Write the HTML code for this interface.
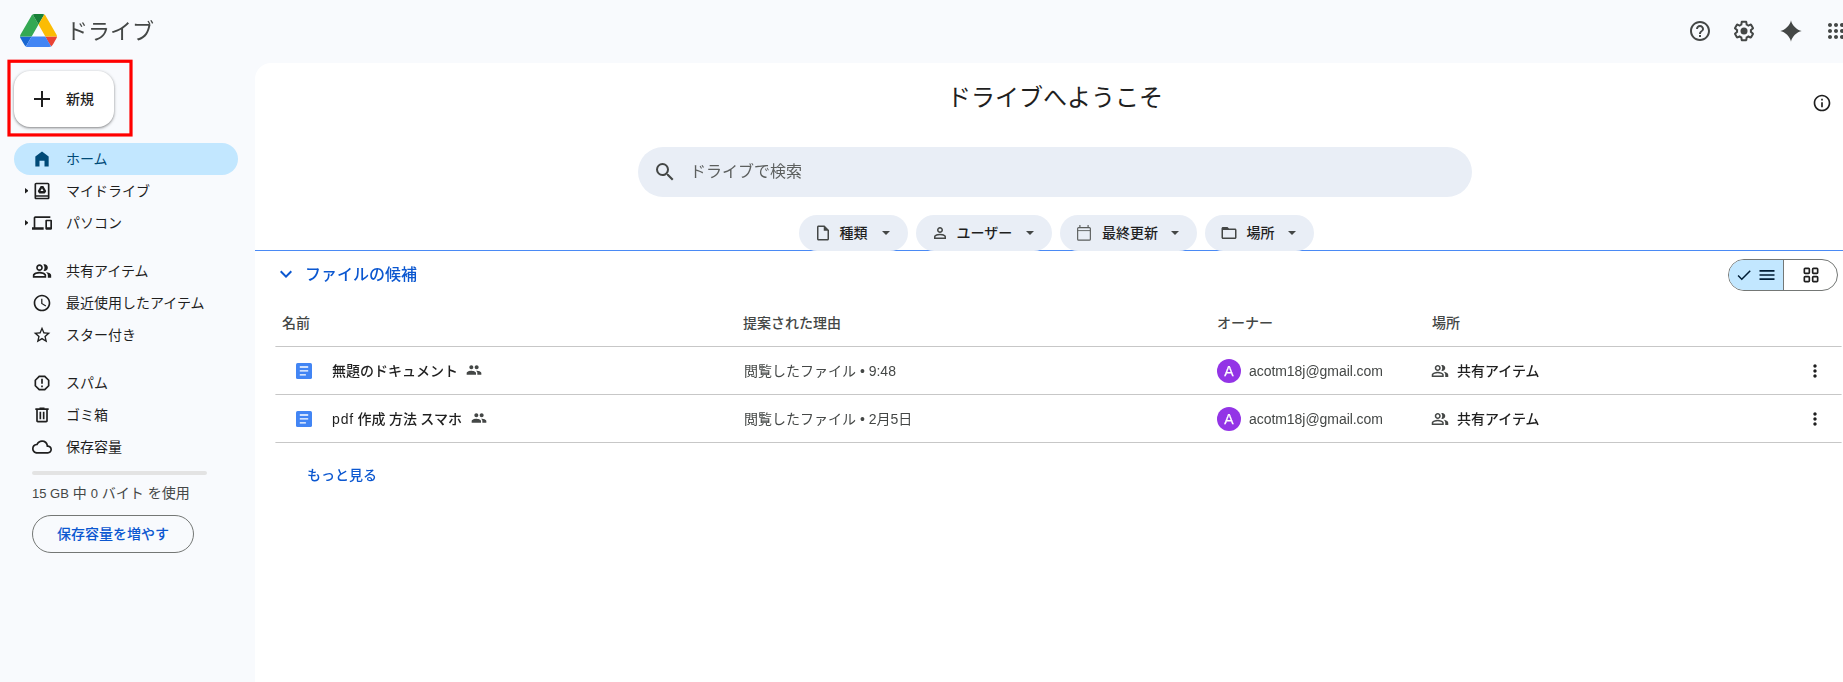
<!DOCTYPE html>
<html lang="ja">
<head>
<meta charset="utf-8">
<title>ホーム - Google ドライブ</title>
<style>
*{box-sizing:border-box;margin:0;padding:0}
html,body{width:1843px;height:682px;overflow:hidden;background:#f8fafd;}
body{font-family:"Liberation Sans","Noto Sans CJK JP",sans-serif;color:#1f1f1f;position:relative;font-size:14px;}
.abs{position:absolute}
svg{display:block}
/* header */
#logo{left:19.500px;top:14px;width:37px;height:33px}
#brand{left:66px;top:15px;font-size:22px;line-height:34px;color:#444746;white-space:nowrap;letter-spacing:0}
.hicon{top:19px;width:24px;height:24px}
/* new button */
#redbox{left:0;top:50px;width:150px;height:100px}
#newbtn{left:14px;top:71px;width:100px;height:56px;border-radius:16px;background:#fff;box-shadow:0 1px 2px rgba(0,0,0,.3),0 1px 3px 1px rgba(0,0,0,.15)}
#newbtn .plus{left:16px;top:16px;width:24px;height:24px}
#newbtn .lbl{left:52px;top:0;line-height:56px;font-size:14px;font-weight:500;color:#1f1f1f}
/* nav */
.nav{left:14px;width:224px;height:32px;border-radius:16px}
.nav.sel{background:#c2e7ff}
.nav .ic{position:absolute;left:18px;top:6px;width:20px;height:20px}
.nav .tx{position:absolute;left:52px;top:0;line-height:32px;font-size:14px;color:#1f1f1f;white-space:nowrap}
.nav.sel .tx{color:#004a77;font-weight:400}
.nav .car{position:absolute;left:10.500px;top:13.300px;width:3.600px;height:5.400px}
#bar{left:32px;top:471px;width:175px;height:4px;border-radius:2px;background:#e3e3e3}
#quota{left:32px;top:483px;font-size:14px;line-height:20px;color:#444746;white-space:nowrap}
#quota .l{font-size:13px}
#more{left:32px;top:515px;width:162px;height:38px;border:1px solid #747775;border-radius:20px;text-align:center;line-height:36px;font-size:14px;font-weight:500;color:#0b57d0}
/* main */
#main{left:255px;top:63px;width:1600px;height:640px;background:#fff;border-radius:16px 0 0 0}
#title{left:255px;top:80px;width:1600px;text-align:center;font-size:24px;line-height:36px;color:#1f1f1f}
#search{left:638px;top:147px;width:834px;height:50px;border-radius:25px;background:#e9eef6}
#search .ph{position:absolute;left:52px;top:1px;line-height:48px;font-size:16px;color:#5c5f5e}
#search svg{position:absolute;left:15px;top:13px;width:24px;height:24px}
.chip{top:215px;height:36px;border-radius:18px;background:#e9eef6;font-size:14px;font-weight:500;color:#1f1f1f}
.chip .ci{position:absolute;left:15px;top:9px;width:18px;height:18px}
.chip .ct{position:absolute;left:40.500px;top:0;line-height:36px;white-space:nowrap}
.chip .cd{position:absolute;right:18px;top:16px;width:0;height:0;border-top:4px solid #444746;border-left:4px solid transparent;border-right:4px solid transparent}
#lower{left:255px;top:250px;width:1600px;height:440px;background:#fff;border-top:1px solid #4a8af5}
#sect{left:305px;top:262px;font-size:16px;line-height:26px;font-weight:500;color:#0b57d0;white-space:nowrap}
.th{top:312px;font-size:14px;line-height:22px;font-weight:500;color:#444746;white-space:nowrap}
#brand,#search .ph,#sect,#seemore{will-change:transform}
.hr{left:276px;width:1565px;height:1px;background:#c7c7c7}
.td{font-size:14px;line-height:22px;white-space:nowrap;will-change:transform}
.name{color:#1f1f1f;font-weight:500;word-spacing:-.5px}
.why{color:#444746}
.own{color:#444746;letter-spacing:-.05px}
.loc{color:#1f1f1f;font-weight:500}
.av{width:24px;height:24px;border-radius:12px;background:#9334e6;color:#fff;font-size:14px;font-weight:400;text-align:center;line-height:25px;will-change:transform;-webkit-text-stroke:.25px #fff}
#seemore{left:307px;top:464px;font-size:14px;line-height:22px;font-weight:500;color:#0b57d0}
</style>
</head>
<body>
<!-- header -->
<svg id="logo" class="abs" viewBox="0 0 87.3 78"><path d="m6.6 66.85 3.85 6.65c.8 1.4 1.95 2.5 3.3 3.3l13.75-23.8h-27.5c0 1.55.4 3.1 1.200 4.500z" fill="#1967d2"/><path d="m43.650 25-13.750-23.800c-1.350.8-2.500 1.900-3.300 3.300l-25.400 44a9.060 9.060 0 0 0 -1.200 4.500h27.500z" fill="#34a853"/><path d="m73.550 76.800c1.350-.8 2.500-1.900 3.300-3.300l1.600-2.750 7.650-13.250c.8-1.400 1.200-2.950 1.200-4.500h-27.502l5.852 11.500z" fill="#ea4335"/><path d="m43.650 25 13.750-23.800c-1.350-.8-2.900-1.200-4.500-1.200h-18.500c-1.600 0-3.150.45-4.500 1.200z" fill="#188038"/><path d="m59.800 53h-32.300l-13.750 23.800c1.350.8 2.900 1.200 4.500 1.200h50.800c1.600 0 3.150-.45 4.500-1.200z" fill="#4285f4"/><path d="m73.400 26.500-12.700-22c-.8-1.400-1.950-2.500-3.300-3.300l-13.750 23.800 16.150 28h27.450c0-1.550-.4-3.100-1.200-4.500z" fill="#fbbc04"/></svg>
<div id="brand" class="abs">ドライブ</div>

<svg class="abs hicon" style="left:1688px" viewBox="0 0 24 24" fill="#444746"><path d="M11 18h2v-2h-2v2zm1-16C6.480 2 2 6.480 2 12s4.480 10 10 10 10-4.480 10-10S17.520 2 12 2zm0 18c-4.410 0-8-3.590-8-8s3.590-8 8-8 8 3.590 8 8-3.590 8-8 8zm0-14c-2.210 0-4 1.790-4 4h2c0-1.100.9-2 2-2s2 .9 2 2c0 2-3 1.750-3 5h2c0-2.250 3-2.500 3-5 0-2.210-1.790-4-4-4z"/></svg>
<svg class="abs hicon" style="left:1732px" viewBox="0 0 24 24" fill="#444746"><path d="M13.850 22.250h-3.700c-.74 0-1.360-.54-1.450-1.270l-.27-1.890c-.27-.14-.53-.29-.79-.46l-1.800.72c-.7.260-1.470-.03-1.810-.65L2.200 15.530c-.35-.66-.2-1.440.36-1.880l1.530-1.190c-.01-.15-.02-.3-.02-.46 0-.15.010-.31.020-.46l-1.520-1.190c-.59-.45-.74-1.260-.37-1.880l1.850-3.190c.34-.62 1.110-.9 1.790-.63l1.810.73c.26-.17.520-.32.780-.46l.27-1.910c.09-.7.710-1.250 1.440-1.250h3.700c.74 0 1.360.54 1.450 1.270l.27 1.890c.27.140.53.290.79.460l1.800-.72c.71-.26 1.480.03 1.820.65l1.840 3.180c.36.660.2 1.440-.36 1.880l-1.520 1.190c.01.15.02.3.02.46s-.01.310-.02.460l1.520 1.190c.56.450.720 1.230.37 1.860l-1.860 3.220c-.34.620-1.110.9-1.800.63l-1.800-.72c-.26.170-.52.320-.78.460l-.27 1.910c-.1.680-.72 1.220-1.460 1.220zm-3.230-2h2.760l.37-2.550.53-.22c.44-.18.880-.44 1.340-.78l.45-.34 2.380.96 1.380-2.400-2.030-1.580.07-.56c.03-.26.060-.51.060-.78s-.03-.53-.06-.78l-.07-.56 2.030-1.580-1.390-2.400-2.390.96-.45-.35c-.42-.32-.87-.58-1.330-.77l-.52-.22-.37-2.550h-2.760l-.37 2.550-.53.21c-.44.190-.88.440-1.340.79l-.45.33-2.380-.95-1.390 2.390 2.030 1.580-.07.560a7 7 0 0 0-.06.790c0 .26.020.53.060.78l.07.560-2.030 1.580 1.380 2.400 2.390-.96.450.35c.43.330.86.580 1.330.77l.53.22.38 2.550z"/><circle cx="12" cy="12" r="3.500"/></svg>
<svg class="abs hicon" style="left:1779px" viewBox="0 0 24 24" fill="#444746"><path d="M12 1.300C12.500 5.800 18.200 11.500 22.700 12C18.200 12.500 12.500 18.200 12 22.700C11.500 18.200 5.800 12.500 1.300 12C5.800 11.500 11.500 5.800 12 1.300z"/></svg>
<svg class="abs hicon" style="left:1824px" viewBox="0 0 24 24" fill="#444746"><path d="M6 8c1.100 0 2-.9 2-2s-.9-2-2-2-2 .9-2 2 .9 2 2 2zm6 12c1.100 0 2-.9 2-2s-.9-2-2-2-2 .9-2 2 .9 2 2 2zm-6 0c1.100 0 2-.9 2-2s-.9-2-2-2-2 .9-2 2 .9 2 2 2zm0-6c1.100 0 2-.9 2-2s-.9-2-2-2-2 .9-2 2 .9 2 2 2zm6 0c1.100 0 2-.9 2-2s-.9-2-2-2-2 .9-2 2 .9 2 2 2zm4-8c0 1.100.9 2 2 2s2-.9 2-2-.9-2-2-2-2 .9-2 2zm-4 2c1.100 0 2-.9 2-2s-.9-2-2-2-2 .9-2 2 .9 2 2 2zm6 6c1.100 0 2-.9 2-2s-.9-2-2-2-2 .9-2 2 .9 2 2 2zm0 6c1.100 0 2-.9 2-2s-.9-2-2-2-2 .9-2 2 .9 2 2 2z"/></svg>

<!-- new button -->
<svg id="redbox" class="abs" viewBox="0 50 150 100"><rect x="9" y="61.250" width="122" height="73.700" fill="none" stroke="#ff0000" stroke-width="3.200"/></svg>
<div id="newbtn" class="abs">
  <svg class="abs plus" viewBox="0 0 24 24" fill="#1f1f1f"><path d="M20 13h-7v7h-2v-7H4v-2h7V4h2v7h7v2z"/></svg>
  <div class="abs lbl">新規</div>
</div>

<!-- nav -->
<div class="abs nav sel" style="top:143px"><svg class="ic" viewBox="0 0 24 24" fill="#004a77"><path d="M12 3 4 9v12h5v-7h6v7h5V9z"/></svg><div class="tx">ホーム</div></div>
<div class="abs nav" style="top:175px"><svg class="car" viewBox="0 0 4 6" fill="#1f1f1f"><path d="M0 0 4 3 0 6z"/></svg><svg class="ic" viewBox="0 0 24 24" fill="#1f1f1f"><path d="M19 2H5C3.900 2 3 2.900 3 4V20C3 21.100 3.900 22 5 22H19C20.100 22 21 21.100 21 20V4C21 2.900 20.100 2 19 2ZM19 20H5V19H19V20ZM19 17H5V4H19V17Z"/><path d="M13.120 6H10.880C10.550 6 10.270 6.190 10.080 6.470L7.140 11.610C7 11.890 7 12.220 7.140 12.500L8.260 14.460C8.400 14.740 8.730 14.930 9.060 14.930H14.940C15.270 14.930 15.600 14.740 15.740 14.460L16.860 12.500C17 12.220 17 11.890 16.860 11.610L13.920 6.470C13.780 6.190 13.450 6 13.120 6ZM10.130 12.070L12 8.800L13.870 12.070H10.130Z"/></svg><div class="tx">マイドライブ</div></div>
<div class="abs nav" style="top:207px"><svg class="car" viewBox="0 0 4 6" fill="#1f1f1f"><path d="M0 0 4 3 0 6z"/></svg><svg class="ic" viewBox="0 0 24 24" fill="#1f1f1f"><path d="M4 6h18V4H4c-1.100 0-2 .9-2 2v11H0v3h14v-3H4V6zm19 2h-6c-.55 0-1 .45-1 1v10c0 .55.45 1 1 1h6c.55 0 1-.45 1-1V9c0-.55-.45-1-1-1zm-1 9h-4v-7h4v7z"/></svg><div class="tx">パソコン</div></div>
<div class="abs nav" style="top:255px"><svg class="ic" viewBox="0 0 24 24" fill="#1f1f1f"><path d="M15 8c0-1.420-.5-2.730-1.330-3.760.42-.14.860-.24 1.330-.24 2.210 0 4 1.790 4 4s-1.790 4-4 4c-.43 0-.84-.09-1.230-.21-.03-.01-.06-.02-.1-.03A5.980 5.980 0 0 0 15 8zm1.660 5.130C18.030 14.060 19 15.320 19 17v3h4v-3c0-2.180-3.580-3.470-6.340-3.870zM9 6c-1.100 0-2 .9-2 2s.9 2 2 2 2-.9 2-2-.9-2-2-2zm0 9c-2.700 0-5.800 1.290-6 2.010V18h12v-1c-.2-.71-3.300-2-6-2M9 4c2.210 0 4 1.790 4 4s-1.790 4-4 4-4-1.790-4-4 1.790-4 4-4zm0 9c2.670 0 8 1.340 8 4v3H1v-3c0-2.660 5.330-4 8-4z"/></svg><div class="tx">共有アイテム</div></div>
<div class="abs nav" style="top:287px"><svg class="ic" viewBox="0 0 24 24" fill="#1f1f1f"><path d="M11.990 2C6.470 2 2 6.480 2 12s4.470 10 9.990 10C17.520 22 22 17.520 22 12S17.520 2 11.990 2zM12 20c-4.420 0-8-3.580-8-8s3.580-8 8-8 8 3.580 8 8-3.580 8-8 8zm.5-13H11v6l5.250 3.150.75-1.230-4.500-2.670z"/></svg><div class="tx">最近使用したアイテム</div></div>
<div class="abs nav" style="top:319px"><svg class="ic" viewBox="0 0 24 24" fill="#1f1f1f"><path d="m22 9.240-7.190-.62L12 2 9.190 8.630 2 9.240l5.460 4.730L5.820 21 12 17.270 18.180 21l-1.630-7.030L22 9.240zM12 15.400l-3.760 2.270 1-4.280-3.320-2.880 4.380-.38L12 6.100l1.710 4.040 4.380.38-3.320 2.880 1 4.280L12 15.400z"/></svg><div class="tx">スター付き</div></div>
<div class="abs nav" style="top:367px"><svg class="ic" viewBox="0 0 24 24" fill="#1f1f1f"><path d="M15.730 3H8.270L3 8.270v7.460L8.270 21h7.460L21 15.730V8.270L15.730 3zM19 14.900 14.900 19H9.100L5 14.900V9.100L9.100 5h5.800L19 9.100v5.800zM11 7h2v6h-2zm0 8h2v2h-2z"/></svg><div class="tx">スパム</div></div>
<div class="abs nav" style="top:399px"><svg class="ic" viewBox="0 0 24 24" fill="#1f1f1f"><path d="M15 4V3H9v1H4v2h1v13c0 1.100.9 2 2 2h10c1.100 0 2-.9 2-2V6h1V4h-5zm2 15H7V6h10v13zM9 8h2v9H9zm4 0h2v9h-2z"/></svg><div class="tx">ゴミ箱</div></div>
<div class="abs nav" style="top:431px"><svg class="ic" viewBox="0 0 24 24" fill="#1f1f1f"><path d="M19.350 10.040A7.490 7.490 0 0 0 12 4C9.110 4 6.600 5.640 5.350 8.040A5.994 5.994 0 0 0 0 14c0 3.310 2.690 6 6 6h13c2.760 0 5-2.240 5-5 0-2.640-2.050-4.780-4.650-4.960zM19 18H6c-2.210 0-4-1.790-4-4s1.790-4 4-4h.71C7.370 7.690 9.480 6 12 6c3.040 0 5.500 2.460 5.500 5.500v.5H19c1.660 0 3 1.340 3 3s-1.340 3-3 3z"/></svg><div class="tx">保存容量</div></div>
<div id="bar" class="abs"></div>
<div id="quota" class="abs"><span class="l">15 GB</span> 中 <span class="l">0</span> バイト を使用</div>
<div id="more" class="abs">保存容量を増やす</div>

<!-- main -->
<div id="main" class="abs"></div>
<div id="title" class="abs">ドライブへようこそ</div>
<svg class="abs" style="left:1812px;top:93px;width:20px;height:20px" viewBox="0 0 24 24" fill="#1f1f1f"><path d="M11 7h2v2h-2zm0 4h2v6h-2zm1-9C6.480 2 2 6.480 2 12s4.480 10 10 10 10-4.480 10-10S17.520 2 12 2zm0 18c-4.410 0-8-3.590-8-8s3.590-8 8-8 8 3.590 8 8-3.590 8-8 8z"/></svg>
<div id="search" class="abs"><svg viewBox="0 0 24 24" fill="#444746"><path d="M15.500 14h-.79l-.28-.27A6.471 6.471 0 0 0 16 9.500 6.500 6.500 0 1 0 9.500 16c1.610 0 3.090-.59 4.230-1.570l.27.28v.79l5 4.990L20.490 19l-4.990-5zm-6 0C7.010 14 5 11.990 5 9.500S7.010 5 9.500 5 14 7.010 14 9.500 11.990 14 9.500 14z"/></svg><div class="ph">ドライブで検索</div></div>

<div id="lower" class="abs"></div>
<div class="abs chip" style="left:799px;width:109px"><svg class="ci" viewBox="0 0 24 24" fill="#444746"><path d="M14 2H6c-1.100 0-2 .9-2 2v16c0 1.100.9 2 2 2h12c1.100 0 2-.9 2-2V8l-6-6zM6 20V4h7v5h5v11H6z"/></svg><div class="ct">種類</div><div class="cd"></div></div>
<div class="abs chip" style="left:916px;width:136px"><svg class="ci" viewBox="0 0 24 24" fill="#444746"><path d="M12 12q-1.650 0-2.825-1.175T8 8q0-1.650 1.175-2.825T12 4q1.650 0 2.825 1.175T16 8q0 1.650-1.175 2.825T12 12Zm-8 8v-2.800q0-.85.438-1.563.437-.712 1.162-1.087 1.550-.775 3.150-1.163Q10.350 13 12 13t3.250.387q1.600.388 3.150 1.163.725.375 1.163 1.087Q20 16.350 20 17.200V20Zm2-2h12v-.8q0-.275-.137-.5-.138-.225-.363-.35-1.350-.675-2.725-1.012Q13.400 15 12 15t-2.775.338Q7.850 15.675 6.500 16.350q-.225.125-.363.35-.137.225-.137.500Zm6-8q.825 0 1.413-.588Q14 8.825 14 8t-.587-1.413Q12.825 6 12 6q-.825 0-1.412.587Q10 7.175 10 8q0 .825.588 1.412Q11.175 10 12 10Z"/></svg><div class="ct">ユーザー</div><div class="cd"></div></div>
<div class="abs chip" style="left:1060px;width:137px"><svg class="ci" viewBox="0 0 18 18" fill="none" stroke="#5a5d5c"><rect x="2.650" y="3.550" width="12.700" height="12.600" rx="1" stroke-width="1.150"/><path d="M2.650 6.600h12.700" stroke-width=".9"/><path d="M4.900 1.100v2.500M13.100 1.100v2.500" stroke-width="1.150"/></svg><div class="ct" style="left:42px">最終更新</div><div class="cd"></div></div>
<div class="abs chip" style="left:1205px;width:109px"><svg class="ci" viewBox="0 0 24 24" fill="#444746"><path d="M20 6h-8l-2-2H4c-1.100 0-2 .9-2 2v12c0 1.100.9 2 2 2h16c1.100 0 2-.9 2-2V8c0-1.100-.9-2-2-2zm0 12H4V8h16v10z"/></svg><div class="ct" style="left:41.500px">場所</div><div class="cd"></div></div>

<svg class="abs" style="left:274px;top:262px;width:24px;height:24px" viewBox="0 0 24 24" fill="#0b57d0"><path d="M7.410 8.590 12 13.170l4.590-4.580L18 10l-6 6-6-6 1.410-1.410z"/></svg>
<div id="sect" class="abs">ファイルの候補</div>

<!-- view toggle -->
<div class="abs" style="left:1728px;top:259px;width:110px;height:32px;border:1px solid #747775;border-radius:16px;overflow:hidden;background:#fff">
  <div class="abs" style="left:0;top:0;width:55px;height:30px;background:#c2e7ff;border-right:1px solid #747775"></div>
  <svg class="abs" style="left:6px;top:6px;width:18px;height:18px" viewBox="0 0 24 24" fill="#001d35"><path d="M9 16.170 4.830 12l-1.420 1.410L9 19 21 7l-1.410-1.410z"/></svg>
  <svg class="abs" style="left:28px;top:5px;width:20px;height:20px" viewBox="0 0 24 24" fill="#001d35"><path d="M3 6h18v2H3zm0 5h18v2H3zm0 5h18v2H3z"/></svg>
  <svg class="abs" style="left:72px;top:5px;width:20px;height:20px" viewBox="0 0 24 24" fill="none" stroke="#1f1f1f" stroke-width="2"><rect x="4" y="4" width="6" height="6" rx="1"/><rect x="14" y="4" width="6" height="6" rx="1"/><rect x="4" y="14" width="6" height="6" rx="1"/><rect x="14" y="14" width="6" height="6" rx="1"/></svg>
</div>

<!-- table -->
<div class="abs th" style="left:282px">名前</div>
<div class="abs th" style="left:743px">提案された理由</div>
<div class="abs th" style="left:1217px">オーナー</div>
<div class="abs th" style="left:1432px">場所</div>
<svg class="abs" style="left:270px;top:340px;width:1573px;height:110px" viewBox="270 340 1573 110"><path d="M275.400 346.500H1841.600M275.400 394.500H1841.600M275.400 442.500H1841.600" stroke="#c7c7c7" stroke-width="1" fill="none"/></svg>

<!-- row 1 -->
<svg class="abs doc" style="left:296px;top:363px;width:16px;height:16px" viewBox="0 0 16 16"><rect x="0" y="0" width="16" height="16" rx="1.600" fill="#4285f4"/><path d="M3.800 3.350h8.400v1.300H3.800zM3.800 7.250h8.400v1.300H3.800zM3.800 11.150h6.100v1.300H3.800z" fill="#fff"/></svg>
<div class="abs td name" style="left:332px;top:360px">無題のドキュメント</div>
<svg class="abs" style="left:466px;top:362px;width:16px;height:16px" viewBox="0 0 24 24" fill="#444746"><path d="M16 11c1.660 0 2.990-1.340 2.990-3S17.660 5 16 5c-1.660 0-3 1.340-3 3s1.340 3 3 3zm-8 0c1.660 0 2.990-1.340 2.990-3S9.660 5 8 5C6.340 5 5 6.340 5 8s1.340 3 3 3zm0 2c-2.330 0-7 1.170-7 3.500V19h14v-2.500c0-2.330-4.670-3.500-7-3.500zm8 0c-.29 0-.62.020-.97.050 1.160.84 1.970 1.970 1.970 3.450V19h6v-2.500c0-2.330-4.670-3.500-7-3.500z"/></svg>
<div class="abs td why" style="left:744px;top:360px">閲覧したファイル • 9:48</div>
<div class="abs av" style="left:1217px;top:359px">A</div>
<div class="abs td own" style="left:1249px;top:360px">acotm18j@gmail.com</div>
<svg class="abs" style="left:1431px;top:362px;width:18px;height:18px" viewBox="0 0 24 24" fill="#444746"><path d="M15 8c0-1.420-.5-2.730-1.330-3.760.42-.14.860-.24 1.330-.24 2.210 0 4 1.790 4 4s-1.790 4-4 4c-.43 0-.84-.09-1.230-.21-.03-.01-.06-.02-.1-.03A5.980 5.980 0 0 0 15 8zm1.660 5.130C18.030 14.060 19 15.320 19 17v3h4v-3c0-2.180-3.580-3.470-6.340-3.870zM9 6c-1.100 0-2 .9-2 2s.9 2 2 2 2-.9 2-2-.9-2-2-2zm0 9c-2.700 0-5.800 1.290-6 2.010V18h12v-1c-.2-.71-3.300-2-6-2M9 4c2.210 0 4 1.790 4 4s-1.790 4-4 4-4-1.790-4-4 1.790-4 4-4zm0 9c2.670 0 8 1.340 8 4v3H1v-3c0-2.660 5.330-4 8-4z"/></svg>
<div class="abs td loc" style="left:1457px;top:360px">共有アイテム</div>
<svg class="abs" style="left:1805px;top:361px;width:20px;height:20px" viewBox="0 0 24 24" fill="#1f1f1f"><path d="M12 8c1.100 0 2-.9 2-2s-.9-2-2-2-2 .9-2 2 .9 2 2 2zm0 2c-1.100 0-2 .9-2 2s.9 2 2 2 2-.9 2-2-.9-2-2-2zm0 6c-1.100 0-2 .9-2 2s.9 2 2 2 2-.9 2-2-.9-2-2-2z"/></svg>

<!-- row 2 -->
<svg class="abs doc" style="left:296px;top:411px;width:16px;height:16px" viewBox="0 0 16 16"><rect x="0" y="0" width="16" height="16" rx="1.600" fill="#4285f4"/><path d="M3.800 3.350h8.400v1.300H3.800zM3.800 7.250h8.400v1.300H3.800zM3.800 11.150h6.100v1.300H3.800z" fill="#fff"/></svg>
<div class="abs td name" style="left:332px;top:408px"><span style="letter-spacing:.9px">pdf</span> 作成 方法 スマホ</div>
<svg class="abs" style="left:471px;top:410px;width:16px;height:16px" viewBox="0 0 24 24" fill="#444746"><path d="M16 11c1.660 0 2.990-1.340 2.990-3S17.660 5 16 5c-1.660 0-3 1.340-3 3s1.340 3 3 3zm-8 0c1.660 0 2.990-1.340 2.990-3S9.660 5 8 5C6.340 5 5 6.340 5 8s1.340 3 3 3zm0 2c-2.330 0-7 1.170-7 3.500V19h14v-2.500c0-2.330-4.670-3.500-7-3.500zm8 0c-.29 0-.62.020-.97.050 1.160.84 1.970 1.970 1.970 3.450V19h6v-2.500c0-2.330-4.670-3.500-7-3.500z"/></svg>
<div class="abs td why" style="left:744px;top:408px">閲覧したファイル • 2月5日</div>
<div class="abs av" style="left:1217px;top:407px">A</div>
<div class="abs td own" style="left:1249px;top:408px">acotm18j@gmail.com</div>
<svg class="abs" style="left:1431px;top:410px;width:18px;height:18px" viewBox="0 0 24 24" fill="#444746"><path d="M15 8c0-1.420-.5-2.730-1.330-3.760.42-.14.860-.24 1.330-.24 2.210 0 4 1.790 4 4s-1.790 4-4 4c-.43 0-.84-.09-1.230-.21-.03-.01-.06-.02-.1-.03A5.980 5.980 0 0 0 15 8zm1.660 5.130C18.030 14.060 19 15.320 19 17v3h4v-3c0-2.180-3.580-3.470-6.340-3.870zM9 6c-1.100 0-2 .9-2 2s.9 2 2 2 2-.9 2-2-.9-2-2-2zm0 9c-2.700 0-5.800 1.290-6 2.010V18h12v-1c-.2-.71-3.300-2-6-2M9 4c2.210 0 4 1.790 4 4s-1.790 4-4 4-4-1.790-4-4 1.790-4 4-4zm0 9c2.670 0 8 1.340 8 4v3H1v-3c0-2.660 5.330-4 8-4z"/></svg>
<div class="abs td loc" style="left:1457px;top:408px">共有アイテム</div>
<svg class="abs" style="left:1805px;top:409px;width:20px;height:20px" viewBox="0 0 24 24" fill="#1f1f1f"><path d="M12 8c1.100 0 2-.9 2-2s-.9-2-2-2-2 .9-2 2 .9 2 2 2zm0 2c-1.100 0-2 .9-2 2s.9 2 2 2 2-.9 2-2-.9-2-2-2zm0 6c-1.100 0-2 .9-2 2s.9 2 2 2 2-.9 2-2-.9-2-2-2z"/></svg>

<div id="seemore" class="abs">もっと見る</div>
</body>
</html>
